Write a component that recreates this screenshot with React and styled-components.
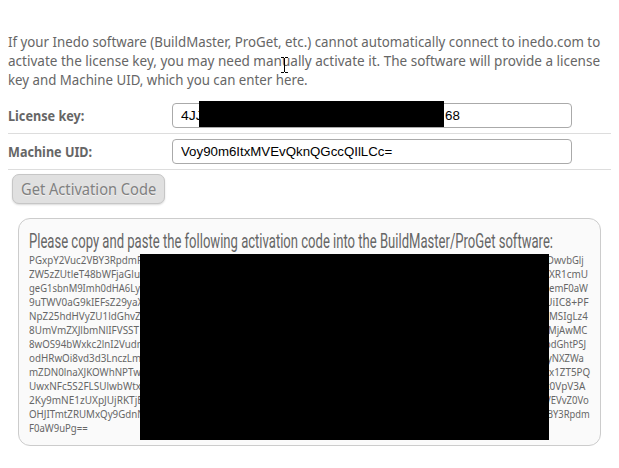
import React, { useLayoutEffect, useRef, useState } from "react";
import styled, { createGlobalStyle } from "styled-components";

const GlobalStyle = createGlobalStyle`
  * { box-sizing: border-box; }
  body { margin: 0; background: #fff; }
`;

const Page = styled.main`
  position: relative;
  width: 619px;
  height: 468px;
  padding: 32px 8px 0;
  overflow: hidden;
  color: #666;
  font-family: "Noto Sans", sans-serif;
`;

const Intro = styled.p`
  margin: 0 0 9px;
  font-size: 15px;
  line-height: 19px;
`;

const Line = styled.span`
  display: block;
  width: ${(p) => p.$width}px;
  white-space: nowrap;
`;

const Glyphs = styled.span`
  display: inline-block;
  transform-origin: 0 50%;
`;

/* Condenses or expands a single line of text to a given width. */
function Fit({ width, children }) {
  const ref = useRef(null);
  const [scale, setScale] = useState(1);
  useLayoutEffect(() => {
    setScale(width / ref.current.offsetWidth);
  }, [width, children]);
  return (
    <Line $width={width}>
      <Glyphs ref={ref} style={{ transform: `scaleX(${scale})` }}>{children}</Glyphs>
    </Line>
  );
}

const FieldRow = styled.div`
  display: grid;
  grid-template-columns: 164px 400px;
  align-items: center;
  width: 603px;
  height: 36px;
  padding-bottom: 1px;
  border-bottom: 1px solid #ddd;
`;

const Label = styled.label`
  font-size: 15px;
  font-weight: 700;
  line-height: 20px;
`;

const Field = styled.div`
  position: relative;
  display: flex;
  align-items: center;
  justify-content: ${(p) => (p.$split ? "space-between" : "flex-start")};
  height: 25px;
  padding: 0 ${(p) => (p.$split ? 111 : 8)}px 0 8px;
  border: 1px solid #aaa;
  border-radius: 4px;
  background: #fff;
  color: #000;
  font: 13.33px/23px "Liberation Sans", Arial, sans-serif;
`;

const Redaction = styled.div`
  position: absolute;
  left: ${(p) => p.$x}px;
  top: ${(p) => p.$y}px;
  width: ${(p) => p.$w}px;
  height: ${(p) => p.$h}px;
  background: #000;
`;

const Button = styled.button`
  display: block;
  width: 153px;
  height: 30px;
  margin: 4px 0 0 4px;
  padding: 0 0 0 8px;
  border: 1px solid #c6c6c6;
  border-radius: 7px;
  background: #e0e0e0;
  box-shadow: 0 1px 2px rgba(0, 0, 0, 0.15);
  color: #808080;
  text-align: left;
  text-shadow: 0 1px 0 #f2f2f2;
  font: 15.5px/28px "Noto Sans", sans-serif;
`;

const Panel = styled.section`
  position: relative;
  width: 583px;
  height: 228px;
  margin: 14px 0 0 10px;
  padding: 11px 10px;
  border: 1px solid #ccc;
  border-radius: 12px;
  background: #fafafa;
`;

const Title = styled.h2`
  height: 23px;
  margin: 0;
  font: 400 19.5px/23px Roboto, sans-serif;
`;

const CodeRow = styled.div`
  display: flex;
  justify-content: space-between;
  width: ${(p) => p.$width}px;
  font-size: 11.5px;
  line-height: 14px;
`;

const Pointer = styled.svg`
  position: absolute;
  left: 281px;
  top: 57px;
`;

const codeRows = [
  ["PGxpY2Vuc2VBY3RpdmF", 113, "DwvbGlj", 37, 555],
  ["ZW5zZUtleT48bWFjaGlu", 111, "XR1cmU", 39, 559],
  ["geG1sbnM9Imh0dHA6Ly", 111, "emF0aW", 39, 559],
  ["9uTWV0aG9kIEFsZ29yaX", 114, "UiIC8+PF", 44, 560],
  ["NpZ25hdHVyZU1ldGhvZ", 112, "MSIgLz4", 39, 559],
  ["8UmVmZXJlbmNlIFVSST", 110, "MjAwMC", 39, 558],
  ["8wOS94bWxkc2lnI2Vudn", 114, "odGhtPSJ", 41, 557],
  ["odHRwOi8vd3d3LnczLm", 112, "yNXZWa", 37, 555],
  ["mZDN0lnaXJKOWhNPTw", 112, "x1ZT5PQ", 41, 561],
  ["UwxNFc5S2FLSUlwbWtx", 112, "t0VpV3A", 39, 556],
  ["2Ky9mNE1zUXpJUjRKTjE", 114, "VEVvZ0Vo", 44, 560],
  ["OHJITmtZRUMxQy9GdnN", 116, "BY3Rpdm", 43, 561],
  ["F0aW9uPg==", 59, "", 0, 561],
];

export default function App() {
  return (
    <>
      <GlobalStyle />
      <Page>
        <Intro>
          <Fit width={592}>If your Inedo software (BuildMaster, ProGet, etc.) cannot automatically connect to inedo.com to</Fit>
          <Fit width={592}>activate the license key, you may need manually activate it. The software will provide a license</Fit>
          <Fit width={300}>key and Machine UID, which you can enter here.</Fit>
        </Intro>
        <FieldRow>
          <Label><Fit width={76}>License key:</Fit></Label>
          <Field $split>
            <Fit width={22}>4JJ</Fit>
            <Fit width={15}>68</Fit>
            <Redaction $x={26} $y={-3} $w={245} $h={26} />
          </Field>
        </FieldRow>
        <FieldRow>
          <Label><Fit width={84}>Machine UID:</Fit></Label>
          <Field><Fit width={211}>Voy90m6ItxMVEvQknQGccQIlLCc=</Fit></Field>
        </FieldRow>
        <Button type="button"><Fit width={135}>Get Activation Code</Fit></Button>
        <Panel>
          <Title><Fit width={524}>Please copy and paste the following activation code into the BuildMaster/ProGet software:</Fit></Title>
          {codeRows.map(([start, startWidth, end, endWidth, rowWidth]) => (
            <CodeRow key={start} $width={rowWidth}>
              <Fit width={startWidth}>{start}</Fit>
              {end && <Fit width={endWidth}>{end}</Fit>}
            </CodeRow>
          ))}
          <Redaction $x={121} $y={35} $w={409} $h={186} />
        </Panel>
        <Pointer width="7" height="16" viewBox="0 0 7 16" aria-hidden="true">
          <path d="M0 .5h3M4 .5h3M3.5 1v14M0 15.5h3M4 15.5h3" fill="none" stroke="#000" />
        </Pointer>
      </Page>
    </>
  );
}
